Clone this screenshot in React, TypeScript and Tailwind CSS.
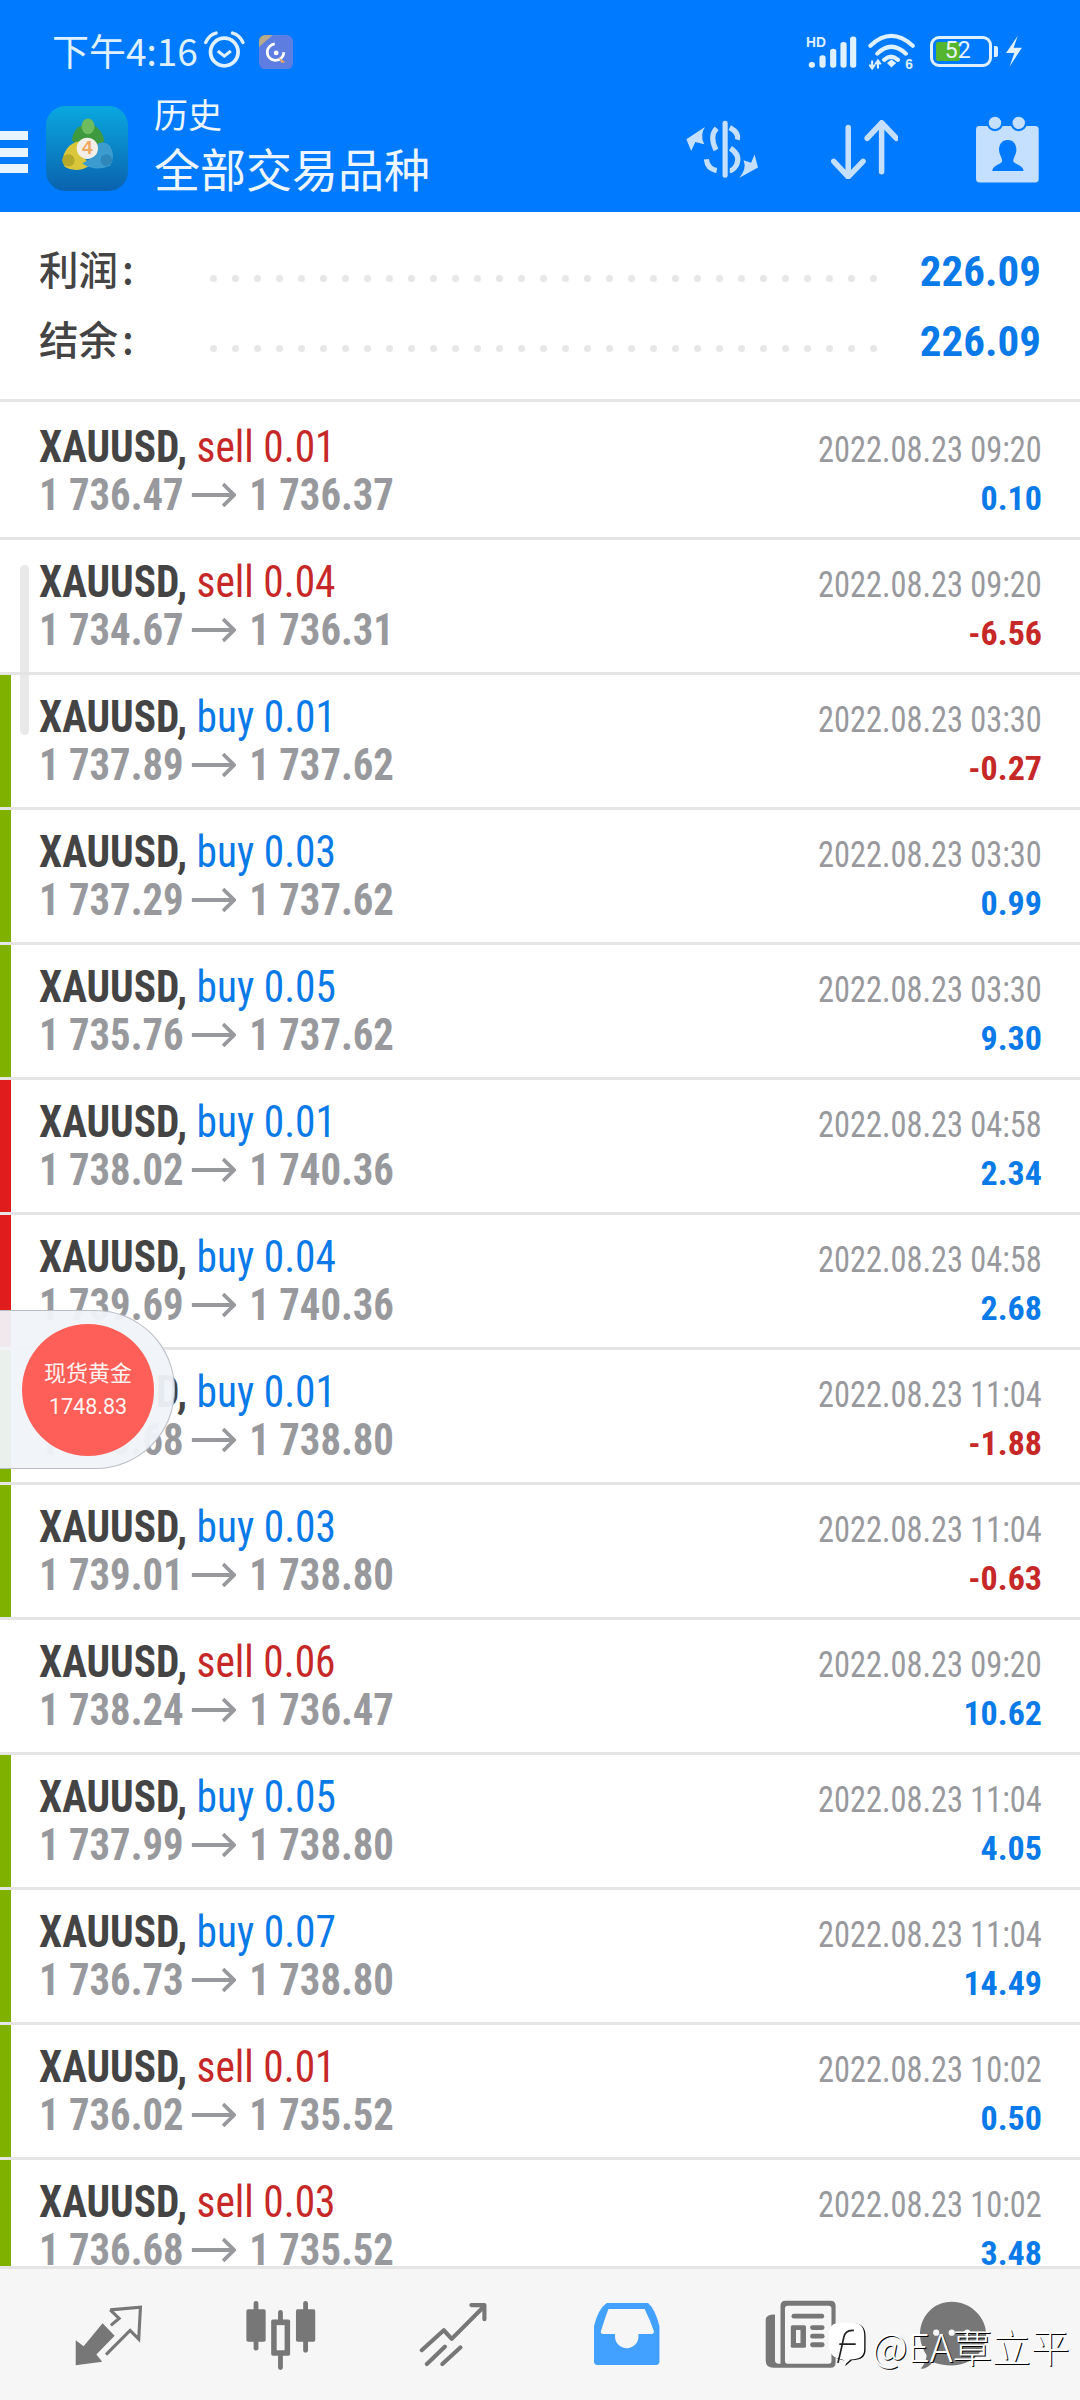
import React from "react";

const K = 2.904;
const S = ({ x, y, w, h, children, className = "" }: { x: number; y: number; w: number; h: number; children: React.ReactNode; className?: string }) => (
  <svg viewBox={`${x} ${y} ${w} ${h}`} width={w / K} height={h / K} className={`block shrink-0 ${className}`}>{children}</svg>
);

const rows: [string, string, string, string, string, string, string][] = [
  ["sell", "0.01", "1 736.47", "1 736.37", "2022.08.23 09:20", "0.10", ""],
  ["sell", "0.04", "1 734.67", "1 736.31", "2022.08.23 09:20", "-6.56", ""],
  ["buy", "0.01", "1 737.89", "1 737.62", "2022.08.23 03:30", "-0.27", "g"],
  ["buy", "0.03", "1 737.29", "1 737.62", "2022.08.23 03:30", "0.99", "g"],
  ["buy", "0.05", "1 735.76", "1 737.62", "2022.08.23 03:30", "9.30", "g"],
  ["buy", "0.01", "1 738.02", "1 740.36", "2022.08.23 04:58", "2.34", "r"],
  ["buy", "0.04", "1 739.69", "1 740.36", "2022.08.23 04:58", "2.68", "r"],
  ["buy", "0.01", "1 740.68", "1 738.80", "2022.08.23 11:04", "-1.88", "g"],
  ["buy", "0.03", "1 739.01", "1 738.80", "2022.08.23 11:04", "-0.63", "g"],
  ["sell", "0.06", "1 738.24", "1 736.47", "2022.08.23 09:20", "10.62", ""],
  ["buy", "0.05", "1 737.99", "1 738.80", "2022.08.23 11:04", "4.05", "g"],
  ["buy", "0.07", "1 736.73", "1 738.80", "2022.08.23 11:04", "14.49", "g"],
  ["sell", "0.01", "1 736.02", "1 735.52", "2022.08.23 10:02", "0.50", "g"],
  ["sell", "0.03", "1 736.68", "1 735.52", "2022.08.23 10:02", "3.48", "g"],
];

const cond = "font-['Roboto_Condensed',Roboto,sans-serif] font-stretch-condensed";

function Arrow() {
  return (
    <svg viewBox="0 0 48 24" width={48} height={24} className="ml-[9px] mr-[14px] shrink-0">
      <path d="M0 12H46M34 1L46 12L34 23" fill="none" stroke="#98999d" strokeWidth={3.8} />
    </svg>
  );
}

function Row({ r }: { r: (typeof rows)[number] }) {
  const [side, lot, a, b, date, pnl, bar] = r;
  return (
    <div className="flex h-[135px] shrink-0 border-b-[3px] border-[#e5e5e5] bg-white">
      <div className={`w-[11px] shrink-0 ${bar === "g" ? "bg-[#7fb200]" : bar === "r" ? "bg-[#e01c1c]" : ""}`} />
      <div className={`flex flex-1 justify-between pl-[28px] pr-[38px] ${cond}`}>
        <div className="flex flex-col pt-[17px]">
          <div className="h-[49px] origin-left scale-x-[0.94] whitespace-nowrap text-[44px] leading-[50px]">
            <span className="font-bold text-[#444444]">XAUUSD, </span>
            <span className={side === "sell" ? "text-[#c62828]" : "text-[#0a7ae8]"}>{side} {lot}</span>
          </div>
          <div className="flex h-[48px] origin-left scale-x-[0.925] items-center whitespace-nowrap text-[44px] font-bold leading-[48px] text-[#98999d]">
            <span>{a}</span>
            <Arrow />
            <span>{b}</span>
          </div>
        </div>
        <div className="flex flex-col items-end pt-[23px]">
          <div className="h-[48px] origin-right scale-x-[0.875] text-[37px] leading-[44px] text-[#98999d]">{date}</div>
          <div className={`text-[34px] font-bold leading-[44px] ${pnl.startsWith("-") ? "text-[#c62828]" : "text-[#0a7ae8]"}`}>{pnl}</div>
        </div>
      </div>
    </div>
  );
}

function Summary({ label, value }: { label: string; value: string }) {
  return (
    <div className="flex h-[70px] items-center">
      <div className="-mt-[6px] flex w-[171px] shrink-0 font-['Noto_Sans_CJK_SC',sans-serif] text-[39.5px] font-medium leading-[64px] text-[#444444]">
        <span>{label}</span>
        <span className="ml-[4px]">:</span>
      </div>
      <div className="flex translate-y-[7px] gap-[15px]">
        {Array.from({ length: 31 }).map((_, i) => (
          <div key={i} className="h-[7px] w-[7px] rounded-full bg-[#e7e7e7]" />
        ))}
      </div>
      <div className={`ml-auto text-[43px] font-bold leading-[70px] text-[#0a7ae8] ${cond}`}>{value}</div>
    </div>
  );
}

function Mt4Logo() {
  return (
    <div className="relative mr-[26px] h-[85px] w-[82px] shrink-0">
      <svg viewBox="135 315 238 247" width={82} height={85} className="block">
        <defs>
          <linearGradient id="mt" x1="0" y1="0" x2="0" y2="1">
            <stop offset="0" stopColor="#0aa8e0" />
            <stop offset="1" stopColor="#0a62ae" />
          </linearGradient>
        </defs>
        <rect x="135" y="315" width="238" height="247" rx="56" fill="url(#mt)" />
        <path d="M210 415Q215 378 240 372L275 372Q298 385 305 418L270 435H240Z" fill="#3f9a3f" />
        <ellipse cx="257" cy="374" rx="19" ry="23" fill="#6fbb60" />
        <path d="M262 488Q225 512 190 492Q175 470 195 440Q215 415 240 418L250 470Z" fill="#d9c63a" />
        <circle cx="200" cy="473" r="18" fill="#b5a82a" />
        <path d="M240 482Q280 508 322 488Q338 460 320 430Q305 415 285 425L270 465Z" fill="#3d9ccf" />
        <circle cx="310" cy="472" r="17" fill="#2f86b8" />
        <circle cx="255" cy="438" r="31" fill="#f3efe8" />
      </svg>
      <div className="absolute left-[36px] top-[31px] font-['Liberation_Sans',sans-serif] text-[19px] font-bold leading-[22px] text-[#f0a860]">4</div>
    </div>
  );
}

function StatusBar() {
  return (
    <div className="flex h-[92px] shrink-0 items-end pb-[22px] pl-[52px] pr-[57px]">
      <div className="font-['Noto_Sans_CJK_SC',sans-serif] text-[37px] leading-[40px] text-[#dff0ff]">下午4:16</div>
      <S x={595} y={97} w={120} h={114} className="ml-[6px]">
        <circle cx="654" cy="158" r="40" fill="none" stroke="#dff0ff" strokeWidth="11" />
        <path d="M635 155L654 170L673 155" fill="none" stroke="#dff0ff" strokeWidth="9" />
        <path d="M600 130Q610 108 630 103M708 130Q698 108 678 103" fill="none" stroke="#dff0ff" strokeWidth="10" strokeLinecap="round" />
      </S>
      <S x={755} y={105} w={99} h={100} className="mb-[1px] ml-[14px]">
        <rect x="755" y="105" width="99" height="100" rx="20" fill="#5d7ee0" />
        <path d="M755 140V125Q755 105 775 105H795Z" fill="#b7a98a" />
        <circle cx="803" cy="155" r="24" fill="none" stroke="#fff" strokeWidth="8" strokeDasharray="110 40" />
        <circle cx="805" cy="157" r="7" fill="#fff" />
        <path d="M812 170L832 184L820 186Z" fill="#e8a868" />
      </S>
      <div className="ml-auto flex items-center">
        <S x={766} y={105} w={148} h={100}>
          <text x="766" y="142" fontFamily="Liberation Sans" fontWeight="700" fontSize="40" fill="#dff0ff">HD</text>
          <rect x="774" y="186" width="18" height="17" rx="8" fill="#dff0ff" />
          <rect x="805" y="167" width="18" height="36" rx="8" fill="#dff0ff" />
          <rect x="836" y="148" width="18" height="55" rx="8" fill="#dff0ff" />
          <rect x="866" y="128" width="18" height="75" rx="8" fill="#dff0ff" />
          <rect x="894" y="112" width="18" height="91" rx="8" fill="#dff0ff" />
        </S>
        <S x={948} y={105} w={138} h={108} className="ml-[11px]">
          <path d="M955 142Q1015 85 1078 142M975 165Q1015 125 1058 165M995 183Q1015 165 1035 183" fill="none" stroke="#dff0ff" strokeWidth="12" strokeLinecap="round" />
          <path d="M1003 192L1016 182L1030 192L1016 205Z" fill="#dff0ff" />
          <path d="M960 185V208M952 197L960 208L968 197M977 208V185M969 196L977 185L985 196" fill="none" stroke="#dff0ff" strokeWidth="6" />
          <text x="1056" y="210" fontFamily="Liberation Sans" fontWeight="700" fontSize="40" fill="#dff0ff">6</text>
        </S>
        <div className="relative ml-[14px] flex h-[31px] w-[62px] shrink-0 items-center justify-center rounded-[9px] border-[3px] border-[#dff0ff]">
          <div className="absolute bottom-[3px] left-[3px] top-[3px] w-[24px] rounded-[2px] bg-[#55b52e]" />
          <div className="relative -ml-[6px] font-['Roboto',sans-serif] text-[23px] leading-[24px] text-[#e8f4ff]">52</div>
        </div>
        <div className="ml-[2px] h-[11px] w-[4px] rounded-r-[2px] bg-[#dff0ff]" />
        <S x={1346} y={108} w={56} h={94} className="ml-[6px]">
          <path d="M1386 110L1352 160H1376L1362 200L1398 145H1374Z" fill="#dff0ff" />
        </S>
      </div>
    </div>
  );
}

function AppBar() {
  return (
    <div className="flex flex-1 items-start">
      <div className="mt-[39px] flex w-[46px] shrink-0 flex-col gap-[7.5px]">
        <div className="h-[9px] w-[27.5px] bg-[#e8f4ff]" />
        <div className="h-[9px] w-[27.5px] bg-[#e8f4ff]" />
        <div className="h-[9px] w-[27.5px] bg-[#e8f4ff]" />
      </div>
      <div className="mt-[14px]"><Mt4Logo /></div>
      <div className="flex flex-col font-['Noto_Sans_CJK_SC',sans-serif] text-[#edf6ff]">
        <div className="text-[34px] leading-[44px]">历史</div>
        <div className="text-[46px] leading-[62px]">全部交易品种</div>
      </div>
      <div className="ml-auto mt-[24px] flex items-start pr-[40px]">
        <S x={420} y={345} w={216} h={175} className="mt-[3px]">
          <g fill="#c5e0ff">
            <rect x="529" y="350" width="15" height="166" rx="7" />
            <path d="M424 404L478 368Q462 392 476 418L450 412L438 438Z" />
            <path d="M632 486L578 516Q600 490 590 465L612 472L622 448Z" />
          </g>
          <path d="M550 370Q578 385 572 405M512 372Q490 395 510 435M482 462Q485 490 512 495M552 430Q582 450 570 478Q560 495 550 495" fill="none" stroke="#c5e0ff" strokeWidth="15" />
        </S>
        <S x={845} y={350} w={195} h={172} className="ml-[72px] mt-[4px]">
          <path d="M895 372V512M853 470L895 515L938 470M992 500V358M950 403L992 358L1035 403" fill="none" stroke="#c5e0ff" strokeWidth="16" strokeLinecap="round" strokeLinejoin="round" />
        </S>
        <S x={1265} y={338} w={188} h={195} className="ml-[77px]">
          <rect x="1268" y="367" width="182" height="164" rx="10" fill="#c5e0ff" />
          <circle cx="1323" cy="358" r="21" fill="#c5e0ff" stroke="#007aff" strokeWidth="6" />
          <circle cx="1392" cy="358" r="21" fill="#c5e0ff" stroke="#007aff" strokeWidth="6" />
          <path d="M1360 408C1382 408 1388 430 1384 445C1381 455 1376 462 1376 470C1385 480 1405 482 1406 498H1315C1316 482 1336 480 1344 470C1344 462 1339 455 1336 445C1332 430 1338 408 1360 408Z" fill="#007aff" />
        </S>
      </div>
    </div>
  );
}

function BottomNav() {
  const c = "#777777";
  return (
    <div className="flex h-[134px] shrink-0 items-start border-t-[3px] border-[#e5e5e5] bg-[#f6f6f6] pl-[74px] pt-[31px]">
      <S x={215} y={305} w={200} h={185} className="mt-[4px]">
        <path d="M220 483V410L243 428L298 361L333 397L280 452L297 473Z" fill={c} />
        <path d="M320 322L408 314L403 407L378 382L308 452M320 322L346 347L322 367" fill="none" stroke={c} strokeWidth="9" />
      </S>
      <S x={712} y={293} w={208} h={205} className="ml-[102px]">
        <g fill={c}>
          <rect x="716" y="320" width="56" height="94" rx="5" />
          <rect x="737" y="296" width="14" height="144" rx="7" />
          <rect x="860" y="320" width="56" height="94" rx="5" />
          <rect x="881" y="296" width="14" height="150" rx="7" />
          <rect x="808" y="322" width="14" height="174" rx="7" />
          <rect x="788" y="350" width="55" height="105" rx="5" />
        </g>
        <rect x="804" y="366" width="23" height="73" fill="#f6f6f6" />
      </S>
      <S x={1220} y={298} w={198} h={188} className="ml-[103px] mt-[2px]">
        <path d="M1228 438L1292 380L1315 405L1408 312M1372 307H1410V348M1243 478L1295 428M1288 478L1340 430" fill="none" stroke={c} strokeWidth="12" strokeLinecap="round" strokeLinejoin="round" />
      </S>
      <S x={155} y={300} w={196} h={186} className="ml-[105px] mt-[2px]">
        <path d="M195 303H315Q335 320 348 370V473Q348 483 338 483H168Q158 483 158 473V370Q170 320 195 303Z" fill="#42a0ff" />
        <path d="M200 320H305Q320 350 332 385Q332 393 325 393H287V400A34 34 0 0 1 219 400V393H185Q176 393 178 385Q190 345 200 320Z" fill="#f6f6f6" />
      </S>
      <S x={655} y={293} w={208} h={200} className="ml-[105px]">
        <path d="M700 310Q700 295 715 295H845Q860 295 860 310V475Q860 490 845 490H680Q657 490 657 468V350Q657 335 684 335V468Q684 478 695 478H700Z" fill={c} />
        <rect x="713" y="310" width="135" height="168" rx="8" fill="#f6f6f6" />
        <g fill={c}>
          <rect x="732" y="333" width="95" height="14" rx="7" />
          <rect x="730" y="366" width="44" height="66" rx="5" />
          <rect x="786" y="366" width="42" height="14" rx="7" />
          <rect x="786" y="391" width="42" height="14" rx="7" />
          <rect x="786" y="416" width="42" height="14" rx="7" />
        </g>
        <rect x="745" y="380" width="13" height="38" fill="#f6f6f6" />
      </S>
      <S x={1100} y={290} w={200} h={205} className="ml-[82px]">
        <path d="M1195 295C1250 295 1295 340 1295 390C1295 440 1250 480 1195 480C1175 480 1155 476 1140 470Q1125 490 1105 490Q1122 470 1122 450C1112 435 1103 412 1103 390C1103 340 1140 295 1195 295Z" fill={c} />
        <circle cx="1150" cy="385" r="9" fill="#f6f6f6" />
        <circle cx="1195" cy="385" r="9" fill="#f6f6f6" />
        <circle cx="1240" cy="385" r="9" fill="#f6f6f6" />
      </S>
    </div>
  );
}

export default function App() {
  return (
    <div className="relative flex h-[2400px] w-[1080px] flex-col overflow-hidden bg-white">
      <div className="flex h-[212px] shrink-0 flex-col bg-[#007aff]">
        <StatusBar />
        <AppBar />
      </div>
      <div className="flex h-[187px] shrink-0 flex-col pl-[39px] pr-[39px] pt-[24px]">
        <Summary label="利润" value="226.09" />
        <Summary label="结余" value="226.09" />
      </div>
      <div className="relative flex min-h-0 flex-1 flex-col overflow-hidden border-t-[3px] border-[#e5e5e5] pt-[3px]">
        {rows.map((r, i) => (
          <Row key={i} r={r} />
        ))}
        <div className="absolute left-[20px] top-[163px] h-[170px] w-[9px] rounded-full bg-[#e4e4e4]/80" />
      </div>
      <BottomNav />

      <div className="absolute left-0 top-[1310px] flex h-[159px] w-[175px] items-center rounded-r-[80px] border border-l-0 border-[#b9bcc4] bg-[#f0f3f8]/95 pl-[22px]">
        <div className="flex h-[132px] w-[132px] flex-col items-center justify-center gap-[9px] rounded-full bg-[#fe5f58] font-['Noto_Sans_CJK_SC',sans-serif] text-[#fff3f0]">
          <div className="-mt-[2px] text-[22px] leading-[28px]">现货黄金</div>
          <div className="font-['Roboto',sans-serif] text-[21.5px] leading-[26px]">1748.83</div>
        </div>
      </div>

      <div className="absolute left-[828px] top-[2322px] flex items-center">
        <svg viewBox="840 360 112 132" width={39} height={45} className="block">
          <path d="M878 364H912Q949 364 949 402V442Q949 472 909 472L889 490Q896 472 884 472Q846 467 846 432V397Q846 364 878 364Z" fill="#111" />
          <path d="M875 362H910Q945 362 945 400V440Q945 470 905 470L885 488Q892 470 880 470Q842 465 842 430V395Q842 362 875 362Z" fill="#fff" />
          <path d="M868 480Q880 430 885 405Q890 382 915 385M872 425H920" fill="none" stroke="#222" strokeWidth="5" />
        </svg>
        <div className="ml-[5px] font-['Noto_Sans_CJK_SC',sans-serif] text-[39px] font-light leading-[44px] text-white [text-shadow:1px_1px_0_#000]">@EA覃立平</div>
      </div>
    </div>
  );
}
